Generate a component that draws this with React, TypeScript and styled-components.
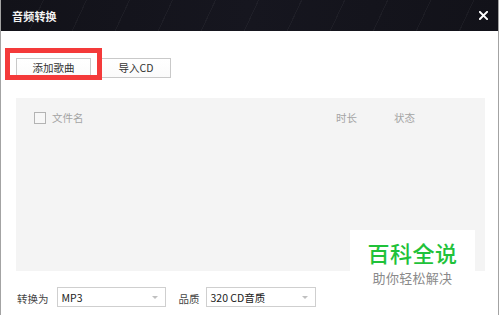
import React from "react";
import styled, { createGlobalStyle } from "styled-components";

const Global = createGlobalStyle`
  html, body { margin: 0; padding: 0; background: #ffffff; }
  body { font-family: "Noto Sans CJK SC", "Noto Sans", sans-serif; }
  *, *::before, *::after { box-sizing: border-box; }
`;

const Window = styled.div`
  position: relative;
  width: 499px;
  height: 315px;
  background: #ffffff;
  border-left: 1px solid #a3a3a3;
  border-right: 1px solid #a3a3a3;
  display: flex;
  flex-direction: column;
  overflow: hidden;
`;

const TitleBar = styled.div`
  height: 31px;
  flex: none;
  display: flex;
  align-items: center;
  justify-content: space-between;
  padding: 0 10px 0 11px;
  background:
    repeating-linear-gradient(115deg, rgba(255,255,255,0) 0 38px, rgba(255,255,255,0.04) 38px 39px),
    linear-gradient(90deg, #121219 0%, #16161f 50%, #121219 100%);
`;

const Title = styled.span`
  color: #f2f2f2;
  font-size: 11px;
  font-weight: 700;
  letter-spacing: 0.2px;
`;

const Close = styled.svg`
  width: 9px;
  height: 9px;
  display: block;
`;

const Toolbar = styled.div`
  display: flex;
  gap: 10px;
  padding: 27px 0 0 15px;
`;

const Highlight = styled.div`
  position: relative;
  &::after {
    content: "";
    position: absolute;
    left: -11px;
    top: -10px;
    width: 97px;
    height: 32px;
    border: 5px solid #f43a3a;
    box-sizing: border-box;
    pointer-events: none;
  }
`;

const Button = styled.button<{ $w: number }>`
  width: ${(p) => p.$w}px;
  height: 20px;
  padding: 0;
  border: 1px solid #c9c9c9;
  background: linear-gradient(#ffffff, #fbfbfb);
  color: #333333;
  font-family: "Noto Sans CJK SC", "Noto Sans", sans-serif;
  font-size: 10.5px;
  line-height: 18px;
  display: flex;
  align-items: center;
  justify-content: center;
`;

const ListPanel = styled.div`
  margin: 20px 13px 0 15px;
  height: 173px;
  background: #f4f4f4;
  display: flex;
  flex-direction: column;
`;

const HeaderRow = styled.div`
  display: flex;
  align-items: center;
  height: 12px;
  margin-top: 14px;
  padding-left: 18px;
  color: #a4a4a4;
  font-size: 10.5px;
`;

const Check = styled.span`
  width: 12px;
  height: 12px;
  border: 1px solid #b3b3b3;
  background: #f7f7f7;
  flex: none;
`;

const Col = styled.span<{ $w?: number; $ml?: number }>`
  display: block;
  line-height: 12px;
  margin-left: ${(p) => p.$ml ?? 0}px;
  width: ${(p) => (p.$w ? `${p.$w}px` : "auto")};
  flex: ${(p) => (p.$w ? "none" : "1")};
`;

const BottomRow = styled.div`
  display: flex;
  align-items: center;
  padding: 16px 0 0 16px;
  font-size: 10.5px;
  color: #444444;
`;

const Label = styled.span<{ $ml?: number; $mr: number }>`
  margin-left: ${(p) => p.$ml ?? 0}px;
  margin-right: ${(p) => p.$mr}px;
  padding-top: 3px;
`;

const Select = styled.div<{ $w: number }>`
  width: ${(p) => p.$w}px;
  height: 20px;
  border: 1px solid #cfcfcf;
  background: #ffffff;
  display: flex;
  align-items: center;
  justify-content: space-between;
  padding: 0 7px 0 4px;
  font-family: "Noto Sans CJK SC", "Noto Sans", sans-serif;
  font-size: 10.5px;
  color: #222222;
`;

const Caret = styled.span`
  width: 0;
  height: 0;
  border-left: 3px solid transparent;
  border-right: 3px solid transparent;
  border-top: 3px solid #c0c0c0;
`;

const Watermark = styled.div`
  position: absolute;
  left: 349px;
  top: 230px;
  width: 125px;
  height: 58px;
  background: #ffffff;
  display: flex;
  flex-direction: column;
  align-items: center;
`;

const WmTitle = styled.span`
  margin-top: 11px;
  font-size: 22px;
  line-height: 22px;
  color: #1fc23a;
  font-weight: 500;
  letter-spacing: 0.5px;
`;

const WmSub = styled.span`
  margin-top: 8px;
  font-size: 13px;
  line-height: 13px;
  color: #8a8a8a;
  letter-spacing: 0.3px;
`;

export default function App() {
  return (
    <>
      <Global />
      <Window>
        <TitleBar>
          <Title>音频转换</Title>
          <Close viewBox="0 0 10 10">
            <path d="M1 1 L9 9 M9 1 L1 9" stroke="#ffffff" strokeWidth="2.2" strokeLinecap="square" />
          </Close>
        </TitleBar>
        <Toolbar>
          <Highlight>
            <Button $w={75}>添加歌曲</Button>
          </Highlight>
          <Button $w={70}>导入CD</Button>
        </Toolbar>
        <ListPanel>
          <HeaderRow>
            <Check />
            <Col $ml={6}>文件名</Col>
            <Col $w={58}>时长</Col>
            <Col $w={91}>状态</Col>
          </HeaderRow>
        </ListPanel>
        <BottomRow>
          <Label $mr={8}>转换为</Label>
          <Select $w={109}>
            <span>MP3</span>
            <Caret />
          </Select>
          <Label $ml={13} $mr={6}>品质</Label>
          <Select $w={110}>
            <span>320 CD音质</span>
            <Caret />
          </Select>
        </BottomRow>
        <Watermark>
          <WmTitle>百科全说</WmTitle>
          <WmSub>助你轻松解决</WmSub>
        </Watermark>
      </Window>
    </>
  );
}
